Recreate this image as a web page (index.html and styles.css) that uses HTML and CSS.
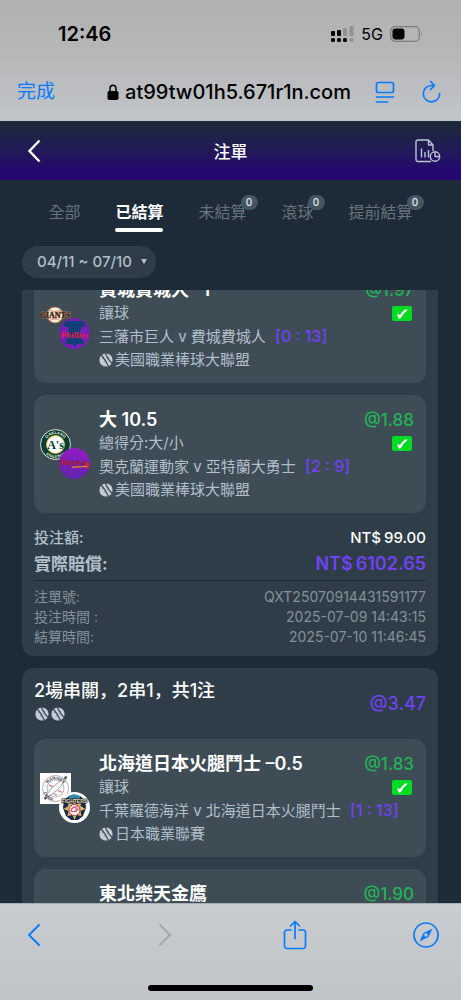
FILE: index.html
```html
<!DOCTYPE html>
<html lang="zh-Hant">
<head>
<meta charset="utf-8">
<meta name="viewport" content="width=device-width, initial-scale=1">
<title>注單</title>
<link rel="stylesheet" href="styles.css">
</head>
<body>
<svg class="defs" aria-hidden="true">
  <symbol id="ball" viewBox="0 0 14 14">
    <circle cx="7" cy="7" r="6.600" fill="#c1ccd6"/>
    <path d="M2 1.500C4.500 4.500 7.500 9 9.500 13.500M6.500 0C7.500 4 10 7.500 13.500 10.500" fill="none" stroke="#3e4c56" stroke-width="1.200"/>
    <path d="M3 5.500l1.600-.9M5.300 9l1.700-.9M8.300 5l1.500-1" stroke="#3e4c56" stroke-width=".8"/>
  </symbol>
  <symbol id="win" viewBox="0 0 20 15">
    <rect width="20" height="15" rx="2" fill="#00dc22"/>
    <path d="M5 8.500Q6.200 7.500 8 9.300Q10.500 4.500 14.500 3L15.500 4Q11.500 7 8.800 12.300Q7 13 6.300 12Q6 10 5 8.500z" fill="#fff"/>
  </symbol>
</svg>

<header class="browser-top">
  <div class="status">
    <span class="clock">12:46</span>
    <span class="signals">
      <svg width="24" height="17" viewBox="0 0 24 17" aria-hidden="true">
        <g fill="#000"><rect x="1" y="5" width="4" height="5" rx="1"/><rect x="7" y="4" width="4" height="6" rx="1"/><rect x="1" y="12" width="4" height="4" rx="1.500"/><rect x="7" y="12" width="4" height="4" rx="1.500"/><rect x="13" y="12" width="4" height="4" rx="1.500"/></g>
        <g fill="#929292"><rect x="13" y="2" width="4" height="8" rx="1"/><rect x="19.500" y="0" width="4" height="10" rx="1"/><rect x="19.500" y="12" width="4" height="4" rx="1.500"/></g>
      </svg>
      <span class="network">5G</span>
      <svg width="33" height="16" viewBox="0 0 33 16" aria-hidden="true">
        <rect x=".7" y=".7" width="28.600" height="14.600" rx="4.500" fill="none" stroke="#7d7d7d" stroke-width="1.200"/>
        <rect x="2.500" y="2.500" width="12" height="11" rx="3" fill="#000"/>
        <path d="M31 5.500q1.800 2.500 0 5z" fill="#7d7d7d"/>
      </svg>
    </span>
  </div>
  <div class="address-bar">
    <button class="done">完成</button>
    <div class="address">
      <svg width="12" height="17" viewBox="0 0 12 17" aria-hidden="true"><rect x=".5" y="7" width="11" height="9" rx="1.800"/><path d="M3 7.500V4.500a3 3.300 0 0 1 6 0v3" fill="none" stroke="#000" stroke-width="1.500"/></svg>
      <span>at99tw01h5.671r1n.com</span>
    </div>
    <div class="page-tools">
      <button class="tool" aria-label="頁面設定"><svg width="20" height="24" viewBox="0 0 20 24" aria-hidden="true"><g fill="none" stroke="#087bff" stroke-width="1.700" stroke-linecap="round"><rect x="1.500" y="2.500" width="17" height="10" rx="2"/><path d="M1.500 17h17M1.500 22h11"/></g></svg></button>
      <button class="tool" aria-label="重新載入"><svg width="20" height="24" viewBox="0 0 20 24" aria-hidden="true"><g fill="none" stroke="#087bff" stroke-width="1.700" stroke-linecap="round" stroke-linejoin="round"><path d="M13 5.500H10.500a8.200 8.200 0 1 0 8.200 8.200M9.500 1.500l4 4-4 4"/></g></svg></button>
    </div>
  </div>
</header>

<nav class="title-bar">
  <button class="back" aria-label="返回"><svg width="14" height="24" viewBox="0 0 14 24" aria-hidden="true"><path d="M12.500 1.500L2.500 12l10 10.500" fill="none" stroke="#fff" stroke-width="2.400"/></svg></button>
  <h1>注單</h1>
  <button class="report" aria-label="報表"><svg width="26" height="24" viewBox="0 0 26 24" aria-hidden="true"><g fill="none" stroke="#b9c5d3" stroke-width="1.400" stroke-linejoin="round"><path d="M16 22.500H3a2 2 0 0 1-2-2V3a2 2 0 0 1 2-2h10.500L18 6v6M13.500 1v5H18M6.500 9.500v9M10 13v5.500M13.500 11v7.500"/><circle cx="20" cy="17.500" r="4.700"/><path d="M20 13v4.500h4.500"/></g></svg></button>
</nav>

<main class="page">
  <div class="tabs">
    <button class="tab">全部</button>
    <button class="tab active">已結算</button>
    <button class="tab">未結算<span class="badge">0</span></button>
    <button class="tab">滾球<span class="badge">0</span></button>
    <button class="tab">提前結算<span class="badge">0</span></button>
  </div>
  <button class="range">04/11 ~ 07/10 <svg width="6" height="6" viewBox="0 0 6 6" aria-hidden="true"><path d="M0 0h6L3 5z" fill="#b5c1cc"/></svg></button>

  <div class="list">
    <article class="ticket scrolled">
      <section class="pick">
        <div class="logos">
          <svg class="home" viewBox="0 0 31 31" aria-hidden="true"><circle cx="15" cy="16" r="8" fill="#f8ede2" stroke="#b5663c" stroke-width=".8"/><path d="M9 11q6 3 12 0M9 22q6-4 12 0" fill="none" stroke="#d77b58" stroke-width=".7"/><text x="15" y="19" font-family="Liberation Serif" font-size="8" font-weight="700" text-anchor="middle" fill="#2c2420" stroke="#b87850" stroke-width=".8" paint-order="stroke">GIANTS</text></svg>
          <svg class="away" viewBox="0 0 31 31" aria-hidden="true"><circle cx="15.500" cy="15.500" r="15.500" fill="#7420b5"/><path d="M8 3h15q4 2 3 6h-4l-1 9 4 6-1 2h-6l-2 3-3-3H7l-1-2 4-6-1-9H5q-1-4 3-6z" fill="#123e79"/><text x="15.500" y="20" font-family="Liberation Serif" font-size="9" font-style="italic" font-weight="700" text-anchor="middle" fill="#e91f3d">Phillies</text></svg>
        </div>
        <div class="details">
          <div class="line lead"><h3>費城費城人 –1</h3><span class="odds">@1.97</span></div>
          <div class="line"><span>讓球</span><svg class="result" role="img" aria-label="贏"><use href="#win"/></svg></div>
          <p class="match">三藩市巨人 v 費城費城人 <b>[0 : 13]</b></p>
          <p class="league"><svg class="ball" aria-hidden="true"><use href="#ball"/></svg>美國職業棒球大聯盟</p>
        </div>
      </section>
      <section class="pick">
        <div class="logos">
          <svg class="home" viewBox="0 0 31 31" aria-hidden="true"><defs><path id="oak" d="M5 15.500a10.500 10.500 0 0 1 21 0"/><path id="ath" d="M1.800 15.500a13.700 13.700 0 0 0 27.400 0"/></defs><circle cx="15.500" cy="15.500" r="15" fill="#063f35" stroke="#e3dfc7"/><circle cx="15.500" cy="15.500" r="9" fill="#fff" stroke="#d8ae3c"/><g font-family="Liberation Sans" font-size="4" font-weight="700" fill="#e9e7d7" text-anchor="middle"><text><textPath href="#oak" startOffset="50%">OAKLAND</textPath></text><text><textPath href="#ath" startOffset="50%">ATHLETICS</textPath></text></g><text x="15.500" y="20" text-anchor="middle" font-family="Liberation Serif" font-size="12" font-weight="700" fill="#063f35">A's</text></svg>
          <svg class="away" viewBox="0 0 31 31" aria-hidden="true"><defs><linearGradient id="violet" x2="0" y2="1"><stop stop-color="#941bc6"/><stop offset="1" stop-color="#6024aa"/></linearGradient></defs><circle cx="15.500" cy="15.500" r="15.500" fill="url(#violet)"/><path d="M12 18.500l14-.8V13l4 2v5l-3 1-1-2-14 1z" fill="#d22643"/><path d="M13 19.200l15-.8" stroke="#d8a038"/><text x="14" y="17" font-family="Liberation Serif" font-size="9" font-style="italic" font-weight="700" text-anchor="middle" fill="#d01f45" stroke="#272567" stroke-width=".6" paint-order="stroke">Braves</text></svg>
        </div>
        <div class="details">
          <div class="line lead"><h3>大 10.5</h3><span class="odds">@1.88</span></div>
          <div class="line"><span>總得分:大/小</span><svg class="result" role="img" aria-label="贏"><use href="#win"/></svg></div>
          <p class="match">奧克蘭運動家 v 亞特蘭大勇士 <b>[2 : 9]</b></p>
          <p class="league"><svg class="ball" aria-hidden="true"><use href="#ball"/></svg>美國職業棒球大聯盟</p>
        </div>
      </section>
      <dl class="totals">
        <div><dt>投注額:</dt><dd><span>NT$</span><span>99.00</span></dd></div>
        <div class="payout"><dt>實際賠償:</dt><dd><span>NT$</span><span>6102.65</span></dd></div>
      </dl>
      <dl class="meta">
        <div><dt>注單號:</dt><dd>QXT25070914431591177</dd></div>
        <div><dt>投注時間 :</dt><dd>2025-07-09 14:43:15</dd></div>
        <div><dt>結算時間:</dt><dd>2025-07-10 11:46:45</dd></div>
      </dl>
    </article>

    <article class="ticket">
      <header class="ticket-head">
        <div><h2 lang="ja">2場串關，2串1，共1注</h2><div class="balls"><svg class="ball" aria-hidden="true"><use href="#ball"/></svg><svg class="ball" aria-hidden="true"><use href="#ball"/></svg></div></div>
        <span class="total-odds">@3.47</span>
      </header>
      <section class="pick">
        <div class="logos">
          <svg class="home" viewBox="0 0 31 31" aria-hidden="true"><path fill="#fff" d="M0 0h31v31H0z"/><defs><path id="mar" d="M6 16a9.500 9.500 0 0 1 19 0"/><path id="chi" d="M3 14a12.500 12.500 0 0 0 13 14"/></defs><g fill="none" stroke="#64616a" stroke-width=".5"><circle cx="15.500" cy="15.500" r="13"/><circle cx="15.500" cy="15.500" r="8.500"/></g><path d="M5 25Q10 14 25 5Q21 18 5 25z" fill="#fff" stroke="#77747d" stroke-width=".7"/><path d="M9 12l4 2M18 18l4 1M14 21l3 1" stroke="#e58da2" stroke-width="1.500"/><g font-family="Liberation Sans" font-size="4" font-weight="700" text-anchor="middle" fill="#45434b"><text><textPath href="#mar" startOffset="50%">MARINES</textPath></text><text><textPath href="#chi" startOffset="55%">CHIBA</textPath></text></g><path d="M4 24l3 1-2 2zM24 4l3-1-1 4z" fill="#333"/></svg>
          <svg class="away" viewBox="0 0 31 31" aria-hidden="true"><circle cx="15.500" cy="15.500" r="15.500" fill="#fff"/><path d="M5 8l5-4 5.500-1L21 4l5 4 1 8-3 8-5 4h-7l-5-4-3-8z" fill="#182d45"/><path d="M10 4l5-2 6 2v3H10z" fill="#3486b1"/><path d="M15.500 9l2 3 5-2-1 4 5 3-5 2 1 5-5-1-2 5-2-5-5 1 1-5-5-2 5-3-1-4 5 2z" fill="#dfb56a"/><circle cx="15.500" cy="18" r="5.500" fill="#fff" stroke="#ac3b45"/><path d="M19 15q-6-1-7 4 5 2 7-2h-3" fill="none" stroke="#df3758" stroke-width="1.200"/><text x="15.500" y="10.500" font-family="Liberation Sans" font-size="5" font-weight="700" text-anchor="middle" fill="#eed69b" stroke="#182d45" stroke-width="1.200" paint-order="stroke">FIGHTERS</text></svg>
        </div>
        <div class="details">
          <div class="line lead"><h3>北海道日本火腿鬥士 –0.5</h3><span class="odds">@1.83</span></div>
          <div class="line"><span>讓球</span><svg class="result" role="img" aria-label="贏"><use href="#win"/></svg></div>
          <p class="match">千葉羅德海洋 v 北海道日本火腿鬥士 <b>[1 : 13]</b></p>
          <p class="league"><svg class="ball" aria-hidden="true"><use href="#ball"/></svg>日本職業聯賽</p>
        </div>
      </section>
      <section class="pick pick-next">
        <div class="logos"></div>
        <div class="details">
          <div class="line lead"><h3>東北樂天金鷹</h3><span class="odds">@1.90</span></div>
        </div>
      </section>
    </article>
  </div>
</main>

<footer class="browser-bottom">
  <div class="actions">
    <button class="tool" aria-label="上一頁"><svg width="14" height="24" viewBox="0 0 14 24" aria-hidden="true"><path d="M12 2L2 12l10 10" fill="none" stroke="#087bff" stroke-width="1.900" stroke-linecap="round"/></svg></button>
    <button class="tool" aria-label="下一頁" disabled><svg width="14" height="24" viewBox="0 0 14 24" aria-hidden="true"><path d="M2 2l10 10L2 22" fill="none" stroke="#a3a6aa" stroke-width="1.900" stroke-linecap="round"/></svg></button>
    <button class="tool" aria-label="分享"><svg width="24" height="30" viewBox="0 0 24 30" aria-hidden="true"><g fill="none" stroke="#087bff" stroke-width="1.700" stroke-linecap="round" stroke-linejoin="round"><path d="M8 10H4a2.500 2.500 0 0 0-2.500 2.500V26A2.500 2.500 0 0 0 4 28.500h16a2.500 2.500 0 0 0 2.500-2.500V12.500A2.500 2.500 0 0 0 20 10h-4M12 18.500V1.800M7.500 6L12 1.500 16.500 6"/></g></svg></button>
    <button class="tool" aria-label="Safari"><svg width="26" height="26" viewBox="0 0 26 26" aria-hidden="true"><circle cx="13" cy="13" r="12" fill="none" stroke="#087bff" stroke-width="1.700"/><path fill="#087bff" fill-rule="evenodd" d="M19.500 6.500L15.500 15 6.500 19.500 10.500 11zM13 11.300a1.700 1.700 0 1 0 0 3.400 1.700 1.700 0 0 0 0-3.400z"/></svg></button>
  </div>
  <div class="home-indicator"></div>
</footer>
</body>
</html>
```
FILE: styles.css
```css
* { box-sizing: border-box; }

body {
  margin: 0;
  height: 100vh;
  display: flex;
  flex-direction: column;
  background: #1c2b37;
  color: #b2bfca;
  font-family: Inter, "Noto Sans CJK TC", sans-serif;
  font-size: 15px;
}

h1, h2, h3, p, dl, dd { margin: 0; }
button { border: 0; padding: 0; background: none; color: inherit; font: inherit; }
svg { display: block; flex: none; }
.defs { position: absolute; width: 0; height: 0; }

.browser-top {
  flex: none;
  padding-bottom: 11px;
  background: linear-gradient(#b1b1b1 0, #b5b6b7 50px, #c1c5c9);
  color: #000;
}
.status {
  display: flex;
  align-items: center;
  justify-content: space-between;
  padding: 18px 38px 0 58px;
  line-height: 32px;
}
.clock { font-size: 20px; font-weight: 600; }
.signals { display: flex; align-items: center; gap: 7px; }
.network { font-size: 16px; font-weight: 400; }
.address-bar {
  display: grid;
  grid-template-columns: 1fr auto 1fr;
  align-items: center;
  padding: 24px 20px 0 17px;
  line-height: 36px;
}
.done { justify-self: start; color: #087bff; font-size: 19px; }
.address {
  display: flex;
  align-items: center;
  gap: 6px;
  font-size: 20px;
  font-weight: 500;
}
.page-tools { display: flex; justify-content: flex-end; gap: 26px; }
.tool { display: flex; align-items: center; justify-content: center; }

.title-bar {
  flex: none;
  display: grid;
  grid-template-columns: 1fr auto 1fr;
  align-items: center;
  height: 59px;
  padding: 0 20px;
  background: linear-gradient(#1c2b37, #211a58 50%, #25086f 85%);
  color: #fff;
}
.title-bar h1 { font-size: 17px; font-weight: 500; }
.back { justify-self: start; padding-left: 7px; }
.report { justify-self: end; }

.page { flex: 1; min-height: 0; display: flex; flex-direction: column; }
.tabs {
  flex: none;
  display: flex;
  justify-content: center;
  gap: 35px;
  padding-top: 17px;
  font-size: 16px;
  line-height: 30px;
  color: #69737a;
}
.tab { position: relative; padding-bottom: 5px; white-space: nowrap; }
.tab.active { color: #fff; font-weight: 700; }
.tab.active::after {
  content: "";
  position: absolute;
  inset: auto 0 0;
  height: 4px;
  border-radius: 2px;
  background: #fff;
}
.badge {
  position: absolute;
  top: -2px;
  right: -11px;
  width: 17px;
  border-radius: 8px;
  background: #435663;
  color: #e4e9ed;
  font-size: 10px;
  font-weight: 500;
  line-height: 15px;
  text-align: center;
}
.range {
  flex: none;
  align-self: flex-start;
  display: flex;
  align-items: center;
  gap: 9px;
  margin: 14px 22px 12px;
  padding: 0 9px 0 15px;
  border-radius: 16px;
  background: #2e3d47;
  font-size: 15px;
  font-weight: 500;
  line-height: 32px;
}

.list {
  flex: 1;
  min-height: 0;
  overflow: hidden;
  display: flex;
  flex-direction: column;
  gap: 12px;
  padding: 0 23px 0 22px;
}
.ticket {
  flex: none;
  display: flex;
  flex-direction: column;
  gap: 12px;
  padding: 12px 12px 9px;
  border-radius: 12px;
  background: #2e3d47;
}
.ticket.scrolled { margin-top: -37px; }
.pick {
  display: flex;
  align-items: center;
  gap: 9px;
  padding: 12px 12px 13px 6px;
  border-radius: 12px;
  background: #3e4c56;
}
.pick-next { align-items: flex-start; }
.logos { flex: none; display: grid; width: 50px; height: 50px; }
.logos svg { grid-area: 1 / 1; width: 31px; height: 31px; overflow: visible; }
.logos .home { place-self: start; }
.logos .away { place-self: end; }
.details { flex: 1; min-width: 0; }
.line { display: flex; align-items: center; justify-content: space-between; line-height: 20px; }
.lead { line-height: 26px; color: #fff; }
h3 { font-size: 18px; font-weight: 600; }
.odds { color: #24b257; font-size: 17px; font-weight: 500; }
.result { width: 20px; height: 15px; margin-right: 2px; }
.match { line-height: 27px; white-space: nowrap; }
.match b { margin-left: 5px; color: #7142f2; font-size: 16px; font-weight: 500; line-height: 20px; }
.league { display: flex; align-items: center; gap: 2px; line-height: 20px; }
.ball { width: 14px; height: 14px; }

.totals div, .meta div { display: flex; justify-content: space-between; }
.totals { line-height: 26px; font-weight: 500; }
.totals dd { display: flex; gap: 3px; color: #fff; }
.payout { font-size: 17px; }
.payout dt { font-weight: 700; }
.totals .payout dd { color: #7142f2; font-size: 18px; font-weight: 600; }
.meta {
  margin-top: -9px;
  padding-top: 6px;
  border-top: 1px solid #1c2b37;
  color: #83919a;
  font-size: 14px;
  line-height: 20px;
}

.ticket-head { display: flex; align-items: center; justify-content: space-between; }
h2 {
  color: #fff;
  font-family: Inter, "Noto Sans CJK JP", sans-serif;
  font-size: 18px;
  font-weight: 500;
  line-height: 22px;
}
.balls { display: flex; gap: 2px; padding: 5px 0 6px 1px; }
.total-odds { color: #7142f2; font-size: 18px; font-weight: 500; }

.browser-bottom {
  flex: none;
  border-top: 1px solid #a9adb1;
  background: linear-gradient(#cacdcf, #c3c6ca 60%, #c1c4c9);
}
.actions {
  display: flex;
  align-items: center;
  justify-content: space-between;
  padding: 16px 22px 0 21px;
}
.actions .tool { width: 26px; }
.home-indicator {
  width: 36%;
  height: 6px;
  margin: 35px auto 9px;
  border-radius: 3px;
  background: #000;
}
```
